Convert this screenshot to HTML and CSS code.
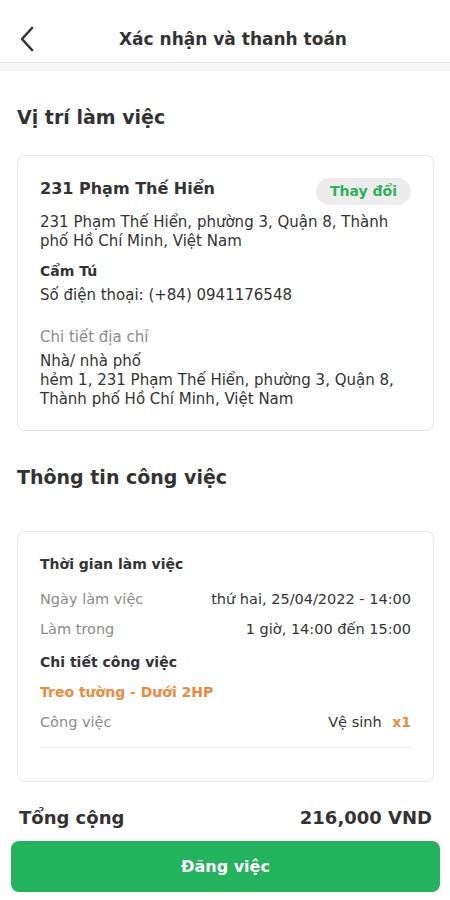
FILE: index.html
```html
<!DOCTYPE html>
<html lang="vi">
<head>
  <meta charset="UTF-8">
  <meta name="viewport" content="width=device-width, initial-scale=1.0">
  <title>Xác nhận và thanh toán</title>
  <link rel="stylesheet" href="styles.css">
</head>
<body>
  <header class="top-bar">
    <button class="back-btn" aria-label="Quay lại">
      <svg width="16" height="26" viewBox="0 0 16 26">
        <path d="M13 2 L3 13 L13 24" fill="none" stroke="#333" stroke-width="2.6" stroke-linecap="round" stroke-linejoin="round"/>
      </svg>
    </button>
    <h1 class="top-title">Xác nhận và thanh toán</h1>
  </header>
  <div class="band"></div>

  <main class="content">
    <h2 class="section-title">Vị trí làm việc</h2>
    <div class="card address-card">
      <div class="address-head">
        <span class="place-name">231 Phạm Thế Hiển</span>
        <button class="change-btn">Thay đổi</button>
      </div>
      <p class="address">231 Phạm Thế Hiển, phường 3, Quận 8, Thành phố Hồ Chí Minh, Việt Nam</p>
      <p class="contact-name">Cẩm Tú</p>
      <p class="phone">Số điện thoại: (+84) 0941176548</p>
      <p class="detail-label">Chi tiết địa chỉ</p>
      <p class="detail-text">Nhà/ nhà phố<br>hẻm 1, 231 Phạm Thế Hiển, phường 3, Quận 8, Thành phố Hồ Chí Minh, Việt Nam</p>
    </div>

    <h2 class="section-title second">Thông tin công việc</h2>
    <div class="card job-card">
      <p class="sub-title">Thời gian làm việc</p>
      <div class="row">
        <span class="row-label">Ngày làm việc</span>
        <span class="row-value">thứ hai, 25/04/2022 - 14:00</span>
      </div>
      <div class="row">
        <span class="row-label">Làm trong</span>
        <span class="row-value">1 giờ, 14:00 đến 15:00</span>
      </div>
      <p class="sub-title detail">Chi tiết công việc</p>
      <p class="job-type">Treo tường - Dưới 2HP</p>
      <div class="row">
        <span class="row-label">Công việc</span>
        <span class="row-value">Vệ sinh <b class="qty">x1</b></span>
      </div>
      <div class="divider"></div>
    </div>

    <div class="total">
      <span>Tổng cộng</span>
      <span>216,000 VND</span>
    </div>
  </main>

  <div class="footer">
    <button class="submit-btn">Đăng việc</button>
  </div>
</body>
</html>
```

FILE: styles.css
```css
/* 基础设置 */
body {
  margin: 0;
  width: 450px;
  font-family: "DejaVu Sans", "Open Sans", sans-serif;
  color: #333;
  background: #fff;
}

p {
  margin: 0;
}

button {
  font-family: inherit;
  border: none;
  cursor: pointer;
}

/* 顶部栏 */
.top-bar {
  position: relative;
  height: 63px;
  padding-top: 15px;
  display: flex;
  align-items: center;
  justify-content: center;
  border-bottom: 1px solid #e4e4e4;
  box-sizing: border-box;
}

.back-btn {
  position: absolute;
  left: 19px;
  top: 26px;
  padding: 0;
  background: none;
  line-height: 0;
}

.top-title {
  margin: 0;
  font-size: 17px;
  font-weight: 700;
  color: #333;
  padding-left: 16px;
}

.band {
  height: 8px;
  background: #f6f6f6;
}

/* 内容 */
.content {
  padding: 0 16px 0 17px;
}

.section-title {
  margin: 32px 0 24px;
  font-size: 19px;
  line-height: 28px;
  font-weight: 700;
}

.section-title.second {
  margin: 32px 0 40px;
}

.card {
  border: 1px solid #e6e6e6;
  border-radius: 8px;
  padding: 20px 22px 21px;
}

.address-card {
  font-size: 15px;
  line-height: 19px;
}

.address-head {
  display: flex;
  justify-content: space-between;
  align-items: center;
  height: 24px;
}

.place-name {
  font-size: 16px;
  font-weight: 700;
}

.change-btn {
  height: 27px;
  padding: 0 14px;
  margin-top: 6px;
  border-radius: 14px;
  background: #ececec;
  color: #2eb15a;
  font-size: 14px;
  font-weight: 700;
}

.address {
  margin-top: 13px;
}

.contact-name {
  margin-top: 10px;
  font-size: 14px;
  font-weight: 700;
  line-height: 20px;
}

.phone {
  margin-top: 4px;
  line-height: 20px;
}

.detail-label {
  margin-top: 22px;
  color: #8c8c8c;
  line-height: 20px;
}

.detail-text {
  margin-top: 5px;
}

/* 工作信息 */
.job-card {
  padding: 22px 22px 33px;
  font-size: 14.5px;
  line-height: 20px;
}

.sub-title {
  font-size: 14px;
  font-weight: 700;
}

.sub-title.detail {
  margin-top: 13px;
}

.row {
  display: flex;
  justify-content: space-between;
  margin-top: 10px;
}

.sub-title + .row {
  margin-top: 15px;
}

.row-label {
  color: #8c8c8c;
}

.qty {
  color: #ef8a3c;
  font-size: 14px;
  margin-left: 6px;
}

.job-type {
  margin-top: 10px;
  font-size: 14px;
  color: #ef8a3c;
  font-weight: 700;
}

.divider {
  margin-top: 15px;
  height: 1px;
  background: #ececec;
}

/* 总计 */
.total {
  display: flex;
  justify-content: space-between;
  margin: 23px 2px 0 2px;
  font-size: 18px;
  line-height: 26px;
  font-weight: 700;
}

.footer {
  padding: 10px 10px 0 11px;
}

.submit-btn {
  width: 100%;
  height: 51px;
  border-radius: 8px;
  background: #22b35c;
  color: #fff;
  font-size: 16px;
  font-weight: 700;
}
```
